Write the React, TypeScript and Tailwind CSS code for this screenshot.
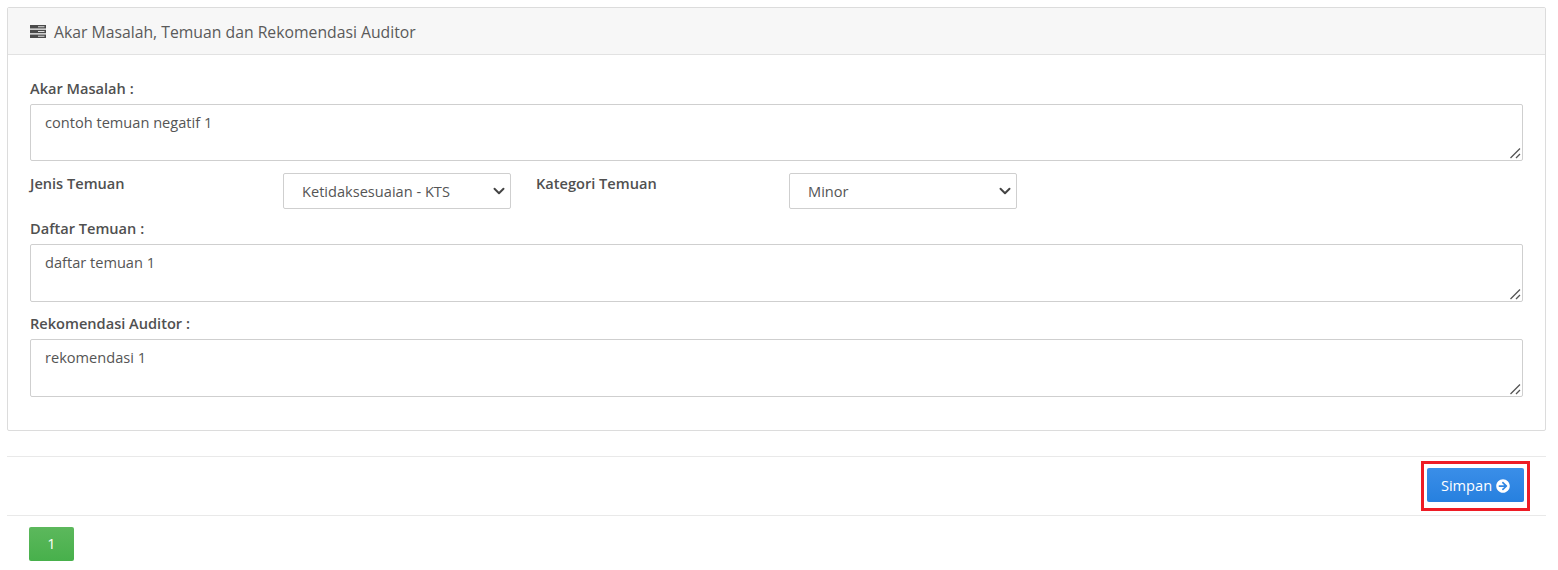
import { FaArrowCircleRight } from "react-icons/fa";
import { ChevronDown } from "lucide-react";

const labelClass = "block text-[14.6px] font-semibold leading-[20px] text-[#505050]";

function Note({ value, className }: { value: string; className: string }) {
  return (
    <div className={`relative ${className}`}>
      <textarea
        className="block h-full w-full resize-none rounded-[2px] border border-[#cfcfcf] bg-white px-[14px] py-[7px] text-[14.6px] leading-[20px] text-[#555] outline-none"
        defaultValue={value}
      />
      {/* resize grip */}
      <svg viewBox="0 0 12 12" className="absolute bottom-[2px] right-[2px] h-[12px] w-[12px] text-[#555]">
        <path d="M1.5 11 L11 1.5 M7 11 L11 7" stroke="currentColor" strokeWidth="1.3" fill="none" />
      </svg>
    </div>
  );
}

function Select({ value }: { value: string }) {
  return (
    <div className="relative h-[36px] w-[228px]">
      <select
        className="block h-full w-full appearance-none rounded-[2px] border border-[#cfcfcf] bg-white pl-[18px] pr-[28px] pt-[2px] text-[14.6px] text-[#555] outline-none"
        defaultValue={value}
      >
        <option value={value}>{value}</option>
      </select>
      <ChevronDown className="pointer-events-none absolute right-[3px] top-[9px] h-[18px] w-[18px] text-[#444]" strokeWidth={2.6} />
    </div>
  );
}

export default function App() {
  return (
    <div className="min-h-screen bg-white pl-[7px] pr-[12px] pt-[7px] font-['Open_Sans',sans-serif] text-[#555]">
      {/* Panel */}
      <div className="h-[424px] rounded-[2px] border border-[#dcdcdc]">
        <div className="flex h-[47px] items-center gap-[8px] border-b border-[#e2e2e2] bg-[#f7f7f7] pl-[22px] pt-[3px] text-[15.75px] text-[#5a5a5a]">
          <svg viewBox="0 0 16 13" className="-mt-[2px] h-[13px] w-[16px]">
            <path d="M0 0h16v3.5H0zM0 4.75h16v3.5H0zM0 9.5h16V13H0z" fill="#4a4a4a" />
            <path d="M8 1.75h6.5M8 6.5h6.5M8 11.25h6.5" stroke="#ddd" strokeWidth="1" />
          </svg>
          <span>Akar Masalah, Temuan dan Rekomendasi Auditor</span>
        </div>

        <div className="px-[22px] pt-[23px]">
          <label className={labelClass}>Akar Masalah :</label>
          <Note className="mt-[6px] h-[57px]" value="contoh temuan negatif 1" />

          <div className="mt-[12px] flex">
            <label className={`${labelClass} w-[253px]`}>Jenis Temuan</label>
            <Select value="Ketidaksesuaian - KTS" />
            <label className={`${labelClass} ml-[25px] w-[253px]`}>Kategori Temuan</label>
            <Select value="Minor" />
          </div>

          <label className={`${labelClass} mt-[9px]`}>Daftar Temuan :</label>
          <Note className="mt-[6px] h-[58px]" value="daftar temuan 1" />

          <label className={`${labelClass} mt-[11px]`}>Rekomendasi Auditor :</label>
          <Note className="mt-[6px] h-[58px]" value="rekomendasi 1" />
        </div>
      </div>

      {/* Actions */}
      <div className="mt-[25px] flex h-[60px] items-center justify-end border-y border-[#e9e9e9] pr-[17px]">
        <div className="-mr-px border-[3px] border-[#ee1c25] px-[3px] pb-[6px] pt-[4px]">
          <button
            type="button"
            className="flex h-[34px] w-[97px] items-center justify-center gap-[4px] rounded-[2px] bg-linear-to-b from-[#3a8ee8] to-[#2680df] pt-px text-[14.6px] text-white"
          >
            Simpan <FaArrowCircleRight className="h-[14px] w-[14px]" />
          </button>
        </div>
      </div>

      {/* Pagination */}
      <div className="pl-[22px] pt-[11px]">
        <button
          type="button"
          className="h-[34px] w-[45px] rounded-[2px] bg-linear-to-b from-[#5cb85c] to-[#47b04b] text-[14.6px] text-white"
        >
          1
        </button>
      </div>
    </div>
  );
}
